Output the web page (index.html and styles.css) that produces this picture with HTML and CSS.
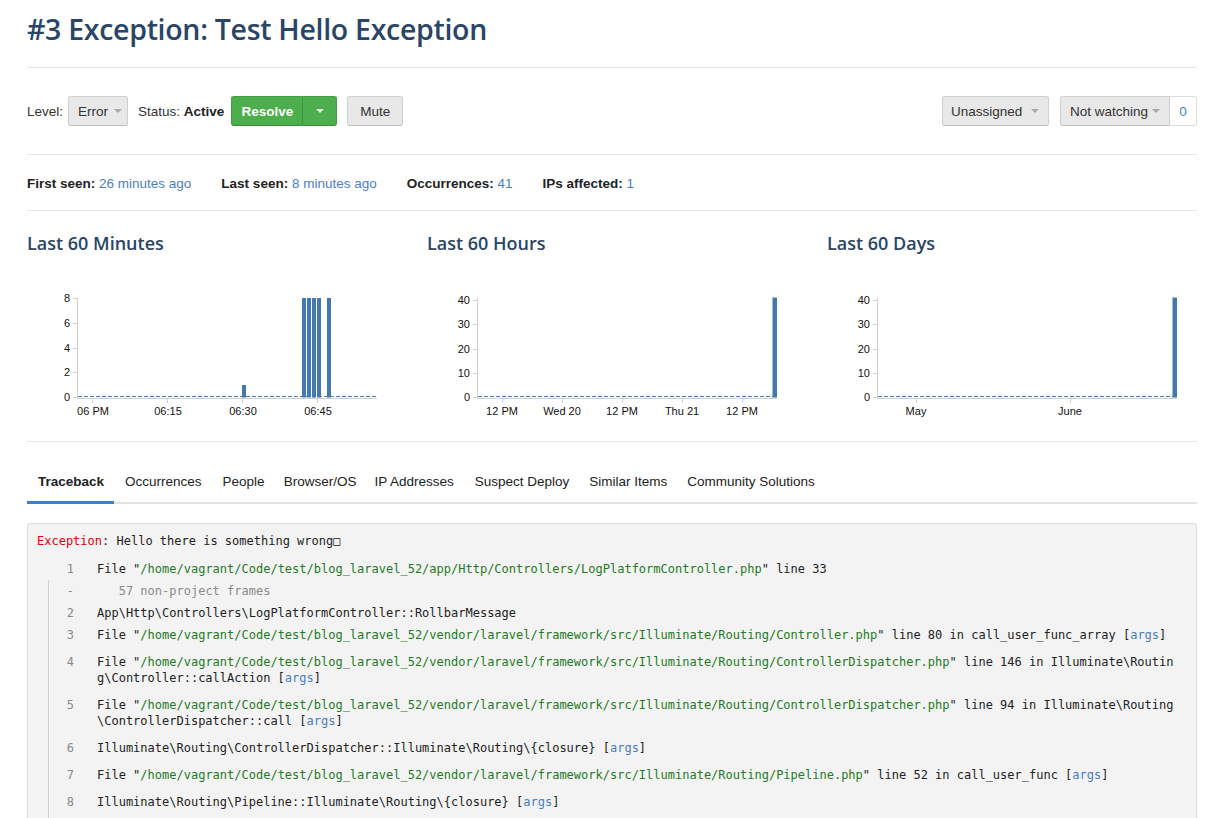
FILE: index.html
```html
<!DOCTYPE html>
<html>
<head>
<meta charset="utf-8">
<link rel="stylesheet" href="styles.css">
</head>
<body>
<div class="page">
  <h1 class="title">#3 Exception: Test Hello Exception</h1>
  <hr class="rule">

  <div class="toolbar">
    <div class="tool-group">
      <span class="label">Level:</span>
      <button class="btn btn-level">Error <span class="caret"></span></button>
      <span class="label status">Status: <b>Active</b></span>
      <div class="split">
        <button class="btn btn-green btn-resolve">Resolve</button>
        <button class="btn btn-green btn-caret"><span class="caret caret-white"></span></button>
      </div>
      <button class="btn btn-mute">Mute</button>
    </div>
    <div class="tool-group">
      <button class="btn btn-assign">Unassigned <span class="caret"></span></button>
      <div class="watch">
        <button class="btn btn-watch">Not watching <span class="caret"></span></button>
        <span class="watch-count">0</span>
      </div>
    </div>
  </div>

  <hr class="rule">

  <div class="stats">
    <span><b>First seen:</b> <a>26 minutes ago</a></span>
    <span><b>Last seen:</b> <a>8 minutes ago</a></span>
    <span><b>Occurrences:</b> <a>41</a></span>
    <span><b>IPs affected:</b> <a>1</a></span>
  </div>

  <hr class="rule">

  <div class="charts">
    <div class="chart">
      <h3 class="chart-title">Last 60 Minutes</h3>
      <svg class="chart-svg" width="400" height="170" viewBox="0 0 400 170">
        <g class="ax">
          <line x1="50.5" y1="43" x2="50.5" y2="143.5"/>
          <line x1="50" y1="143.5" x2="350" y2="143.5"/>
          <line x1="46" y1="43.5" x2="50" y2="43.5"/>
          <line x1="46" y1="68.5" x2="50" y2="68.5"/>
          <line x1="46" y1="93.5" x2="50" y2="93.5"/>
          <line x1="46" y1="117.5" x2="50" y2="117.5"/>
          <line x1="46" y1="142.5" x2="50" y2="142.5"/>
          <line x1="65.5" y1="143" x2="65.5" y2="148"/>
          <line x1="140.5" y1="143" x2="140.5" y2="148"/>
          <line x1="215.5" y1="143" x2="215.5" y2="148"/>
          <line x1="290.5" y1="143" x2="290.5" y2="148"/>
        </g>
        <g class="tick-y">
          <text x="43" y="47">8</text>
          <text x="43" y="72">6</text>
          <text x="43" y="97">4</text>
          <text x="43" y="121">2</text>
          <text x="43" y="146">0</text>
        </g>
        <g class="tick-x">
          <text x="66" y="160">06 PM</text>
          <text x="141" y="160">06:15</text>
          <text x="216" y="160">06:30</text>
          <text x="291" y="160">06:45</text>
        </g>
        <line class="dash" x1="51" y1="141.5" x2="350" y2="141.5"/>
        <g class="bars">
          <rect x="215" y="130" width="4" height="12.5"/>
          <rect x="275" y="43" width="4" height="99.5"/>
          <rect x="280" y="43" width="4" height="99.5"/>
          <rect x="285" y="43" width="4" height="99.5"/>
          <rect x="290" y="43" width="4" height="99.5"/>
          <rect x="300" y="43" width="4" height="99.5"/>
        </g>
      </svg>
    </div>

    <div class="chart">
      <h3 class="chart-title">Last 60 Hours</h3>
      <svg class="chart-svg" width="400" height="170" viewBox="0 0 400 170">
        <g class="ax">
          <line x1="50.5" y1="43" x2="50.5" y2="143.5"/>
          <line x1="50" y1="143.5" x2="350" y2="143.5"/>
          <line x1="46" y1="45.5" x2="50" y2="45.5"/>
          <line x1="46" y1="69.5" x2="50" y2="69.5"/>
          <line x1="46" y1="94.5" x2="50" y2="94.5"/>
          <line x1="46" y1="118.5" x2="50" y2="118.5"/>
          <line x1="46" y1="142.5" x2="50" y2="142.5"/>
          <line x1="75.5" y1="143" x2="75.5" y2="148"/>
          <line x1="135.5" y1="143" x2="135.5" y2="148"/>
          <line x1="195.5" y1="143" x2="195.5" y2="148"/>
          <line x1="255.5" y1="143" x2="255.5" y2="148"/>
          <line x1="315.5" y1="143" x2="315.5" y2="148"/>
        </g>
        <g class="tick-y">
          <text x="43" y="49">40</text>
          <text x="43" y="73">30</text>
          <text x="43" y="98">20</text>
          <text x="43" y="122">10</text>
          <text x="43" y="146">0</text>
        </g>
        <g class="tick-x">
          <text x="75" y="160">12 PM</text>
          <text x="135" y="160">Wed 20</text>
          <text x="195" y="160">12 PM</text>
          <text x="255" y="160">Thu 21</text>
          <text x="315" y="160">12 PM</text>
        </g>
        <line class="dash" x1="51" y1="141.5" x2="350" y2="141.5"/>
        <g class="bars">
          <rect x="345.5" y="42.5" width="4.5" height="100"/>
        </g>
      </svg>
    </div>

    <div class="chart">
      <h3 class="chart-title">Last 60 Days</h3>
      <svg class="chart-svg" width="400" height="170" viewBox="0 0 400 170">
        <g class="ax">
          <line x1="50.5" y1="43" x2="50.5" y2="143.5"/>
          <line x1="50" y1="143.5" x2="350" y2="143.5"/>
          <line x1="46" y1="45.5" x2="50" y2="45.5"/>
          <line x1="46" y1="69.5" x2="50" y2="69.5"/>
          <line x1="46" y1="94.5" x2="50" y2="94.5"/>
          <line x1="46" y1="118.5" x2="50" y2="118.5"/>
          <line x1="46" y1="142.5" x2="50" y2="142.5"/>
          <line x1="89.5" y1="143" x2="89.5" y2="148"/>
          <line x1="243.5" y1="143" x2="243.5" y2="148"/>
        </g>
        <g class="tick-y">
          <text x="43" y="49">40</text>
          <text x="43" y="73">30</text>
          <text x="43" y="98">20</text>
          <text x="43" y="122">10</text>
          <text x="43" y="146">0</text>
        </g>
        <g class="tick-x">
          <text x="89" y="160">May</text>
          <text x="243" y="160">June</text>
        </g>
        <line class="dash" x1="51" y1="141.5" x2="350" y2="141.5"/>
        <g class="bars">
          <rect x="345.5" y="42.5" width="4.5" height="100"/>
        </g>
      </svg>
    </div>
  </div>

  <hr class="rule">

  <ul class="tabs">
    <li><a class="tab active">Traceback</a></li>
    <li><a class="tab">Occurrences</a></li>
    <li><a class="tab">People</a></li>
    <li><a class="tab">Browser/OS</a></li>
    <li><a class="tab">IP Addresses</a></li>
    <li><a class="tab">Suspect Deploy</a></li>
    <li><a class="tab">Similar Items</a></li>
    <li><a class="tab">Community Solutions</a></li>
  </ul>

  <div class="trace">
    <div class="exc"><span class="exc-name">Exception</span>: Hello there is something wrong□</div>
    <div class="frames">
      <div class="row"><span class="num">1</span><span class="code">File "<span class="path">/home/vagrant/Code/test/blog_laravel_52/app/Http/Controllers/LogPlatformController.php</span>" line 33</span></div>
      <div class="frame-group">
        <div class="row"><span class="num">-</span><span class="code muted">   57 non-project frames</span></div>
        <div class="row"><span class="num">2</span><span class="code">App\Http\Controllers\LogPlatformController::RollbarMessage</span></div>
        <div class="row args-row"><span class="num">3</span><span class="code">File "<span class="path">/home/vagrant/Code/test/blog_laravel_52/vendor/laravel/framework/src/Illuminate/Routing/Controller.php</span>" line 80 in call_user_func_array [<a class="args">args</a>]</span></div>
        <div class="row args-row"><span class="num">4</span><span class="code">File "<span class="path">/home/vagrant/Code/test/blog_laravel_52/vendor/laravel/framework/src/Illuminate/Routing/ControllerDispatcher.php</span>" line 146 in Illuminate\Routing\Controller::callAction [<a class="args">args</a>]</span></div>
        <div class="row args-row"><span class="num">5</span><span class="code">File "<span class="path">/home/vagrant/Code/test/blog_laravel_52/vendor/laravel/framework/src/Illuminate/Routing/ControllerDispatcher.php</span>" line 94 in Illuminate\Routing\ControllerDispatcher::call [<a class="args">args</a>]</span></div>
        <div class="row args-row"><span class="num">6</span><span class="code">Illuminate\Routing\ControllerDispatcher::Illuminate\Routing\{closure} [<a class="args">args</a>]</span></div>
        <div class="row args-row"><span class="num">7</span><span class="code">File "<span class="path">/home/vagrant/Code/test/blog_laravel_52/vendor/laravel/framework/src/Illuminate/Routing/Pipeline.php</span>" line 52 in call_user_func [<a class="args">args</a>]</span></div>
        <div class="row args-row"><span class="num">8</span><span class="code">Illuminate\Routing\Pipeline::Illuminate\Routing\{closure} [<a class="args">args</a>]</span></div>
        <div class="row args-row"><span class="num">9</span><span class="code">File "<span class="path">/home/vagrant/Code/test/blog_laravel_52/vendor/laravel/framework/src/Illuminate/Routing/Pipeline.php</span>" line 103 in call_user_func [<a class="args">args</a>]</span></div>
      </div>
    </div>
  </div>
</div>
</body>
</html>
```

FILE: styles.css
```css
* { box-sizing: border-box; }

body {
  margin: 0;
  background: #fff;
  color: #333;
  font-family: "Liberation Sans", Arial, sans-serif;
  font-size: 13.5px;
}

.page {
  width: 1170px;
  margin-left: 27px;
}

.title {
  font-family: "Open Sans", sans-serif;
  font-weight: 600;
  font-size: 28.5px;
  line-height: 36px;
  margin: 11px 0 20px;
  color: #2a4565;
  letter-spacing: -0.3px;
}

.rule {
  border: 0;
  border-top: 1px solid #e5e5e5;
  margin: 0;
  height: 0;
}

/* toolbar */
.toolbar {
  display: flex;
  justify-content: space-between;
  align-items: center;
  margin: 28px 0 28px;
  height: 30px;
}

.tool-group {
  display: flex;
  align-items: center;
}

.label { color: #333; white-space: nowrap; }
.label b { color: #222; }

.btn {
  font-family: inherit;
  font-size: 13.5px;
  color: #333;
  height: 30px;
  display: inline-flex;
  align-items: center;
  background: #e8e8e8;
  border: 1px solid #cfcfcf;
  border-bottom-color: #bdbdbd;
  border-radius: 3px;
  padding: 0 9px;
  margin: 0;
  white-space: nowrap;
  cursor: pointer;
}

.caret {
  display: inline-block;
  width: 0;
  height: 0;
  border-left: 4px solid transparent;
  border-right: 4px solid transparent;
  border-top: 4px solid #a8a8a8;
  margin-left: 6px;
}

.caret-white { border-top-color: #e8f5e8; margin-left: 0; }

.btn-level { margin-left: 5px; width: 60px; padding-left: 9px; }
.status { margin-left: 10px; }

.split {
  display: flex;
  margin-left: 7px;
}

.btn-green {
  background: #4cae4c;
  border-color: #45a045;
  border-bottom-color: #3d8f3d;
  color: #fff;
  font-weight: bold;
}

.btn-resolve {
  width: 72px;
  justify-content: center;
  border-radius: 3px 0 0 3px;
  border-right-color: #3f923f;
}

.btn-caret {
  width: 34px;
  justify-content: center;
  border-left: 0;
  border-radius: 0 3px 3px 0;
}

.btn-mute {
  margin-left: 10px;
  width: 56px;
  justify-content: center;
}

.btn-assign {
  width: 107px;
  padding: 0 8px;
  justify-content: space-between;
}
.btn-assign .caret { margin-right: 1px; }

.watch {
  display: flex;
  margin-left: 11px;
}

.btn-watch {
  width: 110px;
  padding: 0 9px;
  justify-content: space-between;
  border-radius: 3px 0 0 3px;
}
.btn-watch .caret { margin-left: 3px; }

.watch-count {
  width: 27px;
  height: 30px;
  display: flex;
  align-items: center;
  justify-content: center;
  border: 1px solid #ddd;
  border-left: 0;
  border-radius: 0 3px 3px 0;
  color: #3f7fd0;
  background: #fff;
}

/* stats */
.stats {
  display: flex;
  gap: 30px;
  line-height: 18px;
  margin: 20px 0 17px;
}
.stats b { color: #222; }
.stats a { color: #4a7fc4; }

/* charts */
.charts {
  display: grid;
  grid-template-columns: 400px 400px 370px;
  margin-top: 20px;
}

.chart-title {
  font-family: "Open Sans", sans-serif;
  font-weight: 600;
  font-size: 18px;
  line-height: 24px;
  margin: 0;
  color: #2a4565;
}

.chart-svg {
  display: block;
  overflow: visible;
  margin-bottom: 16px;
}

.ax line {
  stroke: #cfcfcf;
  stroke-width: 1;
}

.tick-y text, .tick-x text {
  font-family: "Liberation Sans", Arial, sans-serif;
  font-size: 11px;
  fill: #111;
}
.tick-y text { text-anchor: end; }
.tick-x text { text-anchor: middle; }

.dash {
  stroke: #4a7db3;
  stroke-width: 1.2;
  stroke-dasharray: 4 2;
}

.bars rect { fill: #4479b0; }

/* tabs */
.tabs {
  list-style: none;
  display: flex;
  margin: 18px 0 0;
  padding: 0;
  border-bottom: 2px solid #e3e3e3;
}

.tab {
  display: block;
  padding: 13px 10px 10px;
  line-height: 18px;
  color: #222;
  border-bottom: 3px solid transparent;
  margin-bottom: -2px;
}

.tabs li:nth-child(1) .tab { padding-left: 11px; padding-right: 10px; }
.tabs li:nth-child(2) .tab { padding-left: 11px; padding-right: 11px; }
.tabs li:nth-child(3) .tab { padding-right: 9px; }
.tabs li:nth-child(4) .tab { padding-right: 8px; }
.tabs li:nth-child(6) .tab { padding-left: 11px; }

.tab.active {
  font-weight: bold;
  border-bottom-color: #3f7fc6;
}

/* traceback */
.trace {
  margin-top: 19px;
  background: #f3f3f3;
  border: 1px solid #dcdcdc;
  border-radius: 3px;
  padding: 9px 0 20px 9px;
  font-family: "DejaVu Sans Mono", "Liberation Mono", monospace;
  font-size: 12px;
  line-height: 16px;
  color: #222;
}

.exc-name { color: #e0000a; }

.frames {
  margin-top: 9px;
  margin-left: 11px;
}

.row {
  display: flex;
  padding: 3px 0;
}

.args-row { padding-bottom: 8px; }

.num {
  width: 26px;
  flex: none;
  text-align: right;
  color: #8a8a8a;
}

.frame-group {
  border-left: 1px solid #cfcfcf;
}

.frame-group .num { width: 25px; }

.code {
  margin-left: 23px;
  width: 149.5ch;
  white-space: pre-wrap;
  word-break: break-all;
}

.muted { color: #8a8a8a; }
.path { color: #237a23; }
.args { color: #4a7cc4; }
```
